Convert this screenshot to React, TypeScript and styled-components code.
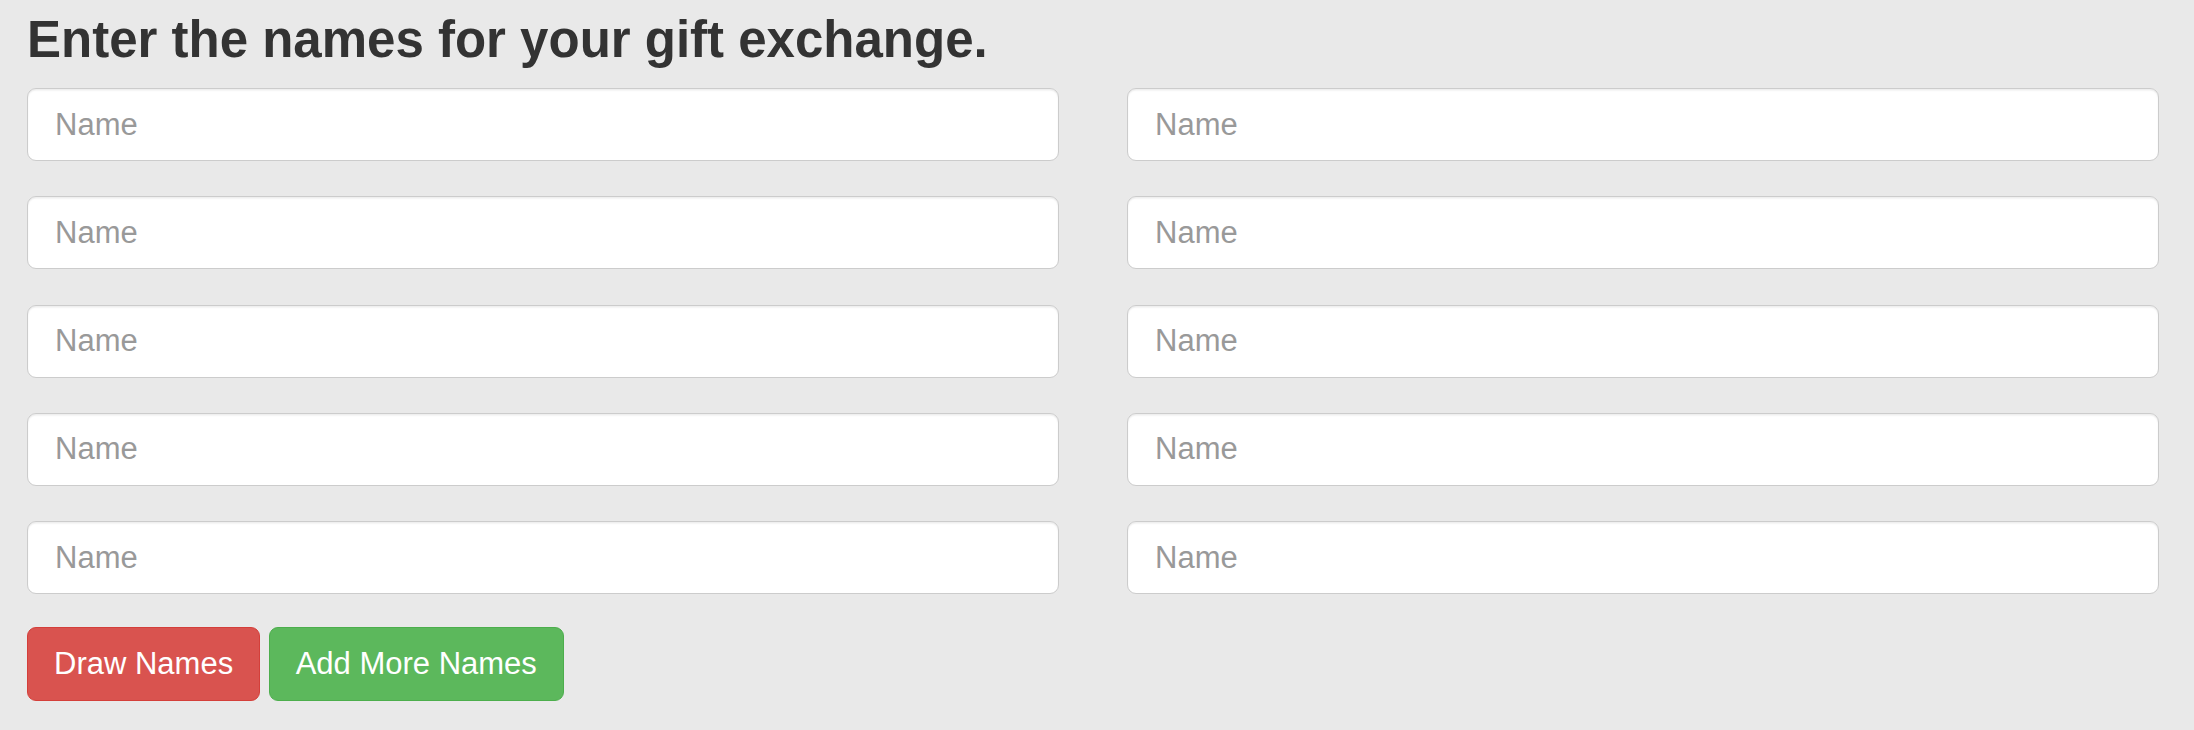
import React from "react";
import styled, { createGlobalStyle } from "styled-components";

const GlobalStyle = createGlobalStyle`
  html, body {
    margin: 0;
    padding: 0;
    background: #e9e9e9;
  }
  body {
    font-family: "Liberation Sans", Arial, Helvetica, sans-serif;
    color: #333;
  }
  * { box-sizing: border-box; }
`;

const Page = styled.div`
  padding: 12px 35px 0 27px;
`;

const Heading = styled.h2`
  margin: 0 0 20px;
  font-size: 51px;
  line-height: 1.1;
  font-weight: 700;
  color: #333;
`;

const NameGrid = styled.div`
  display: grid;
  grid-template-columns: 1fr 1fr;
  column-gap: 68px;
  row-gap: 35.3px;
`;

const NameInput = styled.input`
  display: block;
  width: 100%;
  height: 73px;
  padding: 0 27px;
  font-family: "Liberation Sans", Arial, Helvetica, sans-serif;
  font-size: 31px;
  color: #555;
  background: #fff;
  border: 1.5px solid #ccc;
  border-radius: 9px;
  box-shadow: inset 0 1.5px 1.5px rgba(0, 0, 0, 0.075);
  outline: none;
  &::placeholder {
    color: #999;
    opacity: 1;
  }
`;

const Actions = styled.div`
  display: flex;
  gap: 8.5px;
  margin-top: 33px;
`;

const Button = styled.button<{ $variant: "danger" | "success" }>`
  height: 74px;
  padding: 0 26px;
  font-family: "Liberation Sans", Arial, Helvetica, sans-serif;
  font-size: 31px;
  color: #fff;
  border-radius: 9px;
  cursor: pointer;
  border: 1.5px solid
    ${(p) => (p.$variant === "danger" ? "#d43f3a" : "#4cae4c")};
  background: ${(p) => (p.$variant === "danger" ? "#d9534f" : "#5cb85c")};
`;

export default function App() {
  const fields = Array.from({ length: 10 }, (_, i) => i);
  return (
    <>
      <GlobalStyle />
      <Page>
        <Heading>Enter the names for your gift exchange.</Heading>
        <NameGrid>
          {fields.map((i) => (
            <NameInput key={i} type="text" placeholder="Name" />
          ))}
        </NameGrid>
        <Actions>
          <Button $variant="danger">Draw Names</Button>
          <Button $variant="success">Add More Names</Button>
        </Actions>
      </Page>
    </>
  );
}
